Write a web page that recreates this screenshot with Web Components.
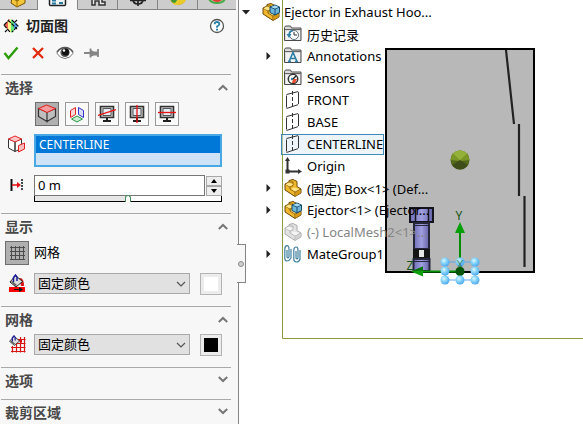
<!DOCTYPE html>
<html lang="zh-CN">
<head>
<meta charset="utf-8">
<title>切面图</title>
<style>
html, body { margin: 0; height: 100%; background: #fff; }
body { font-family: "Noto Sans", "Noto Sans CJK SC", sans-serif; font-size: 13px; color: #000; overflow: hidden; }
</style>
</head>
<body>
<cad-app></cad-app>
<script>
const svg = (w, h, body) => `<svg width="${w}" height="${h}" viewBox="0 0 ${w} ${h}" fill="none" aria-hidden="true">${body}</svg>`;

const monitor = line => svg(18, 18, `<path d="M2.500 1.500h13v11h-13z" fill="#c9c9c9" stroke="#333" stroke-width="1.600"/><path d="M5 3.500h8v7H5z" fill="#e6eef6" stroke="#555"/><path d="M9 13v3M5 16h8" stroke="#222" stroke-width="2"/>${line}`);
const plane = svg(18, 18, '<path d="M2.500 3.500L14.500 .5v13l-12 4z" stroke="#333" stroke-dasharray="12 1"/><path d="M8.500 0v18" stroke="#333" stroke-dasharray="4 2"/>');
const folder = inner => svg(18, 18, `<path d="M.5 15.500V2.500l1-1.500h5l1 2h9.500v12.500z" fill="#d9d9d9" stroke="#4a4a4a"/><path d="M1 4.500h16" stroke="#666"/><path d="M2 6h14v9H2z" fill="#f2f2f2"/>${inner}`);
const part = (a, b, c, s) => `<path d="M1 5l4-2V1.500L9 .5l4 2v5l4 2.500v4l-6 3.500L1 11z" fill="${a}" stroke="${s}"/><path d="M1 5l5 3 3-1.500V3L5 3M6 8v2l5 3 6-3M11 13v4" stroke="${s}" stroke-width=".8"/><path d="M1.500 5.500L5 3.500l4 2-3 2zM9 3l3-.5M7 10l3-1.500 5.500 1.500-4.500 2.500z" fill="${b}"/><path d="M11.500 13.500l5-2.500v3l-5 3z" fill="${c}"/>`;
const cube = '<path d="M8 4l5-2 4.500 2v5.500L13 12 8 9.500z" fill="#6eb6dc" stroke="#164c6b"/><path d="M8 4l5 2 4.500-2M13 6v6" stroke="#164c6b"/><path d="M9 4l4-1.500L16.500 4 13 5.500z" fill="#a9daf0"/>';
const bucket = '<path d="M7.500 1.500l7 6-6.500 5.500-6-5z" fill="#ddd" stroke="#222"/><path d="M5.500 8V3.500L7.500 1 9 3v4" stroke="#1b1b99" stroke-width="1.500"/><path d="M3 8l5 4 1-1-5-4z" fill="#555"/>';

const ICONS = {
  tabPart: svg(24, 8, '<path d="M5 -2l5 3 8-5v7l-8 4-6-4z" fill="#f3c63b" stroke="#7a5200"/><path d="M10 1v6M10 1l8-5" stroke="#a87500"/>'),
  tabProps: svg(24, 8, '<path d="M3.500 0v4.500q0 1 1 1h14q1 0 1-1V0" fill="#eef4f8" stroke="#222" stroke-width="1.500"/><path d="M6 .5h4M6 3.500h4M13 3h4" stroke="#26789e" stroke-width="2"/>'),
  tabConfig: svg(24, 8, '<path d="M6 -1v6h3V1h4v4h6V2h-3V-1" fill="#e8e8e8" stroke="#333" stroke-width="1.500"/>'),
  tabTarget: svg(24, 8, '<path d="M12 -2v8M4 .5h16M7 -1q0 5 5 5t5-5" stroke="#222" stroke-width="1.700"/>'),
  tabDisplay: svg(24, 8, '<ellipse cx="12" cy="-2" rx="8" ry="7" fill="#cf9c24"/><path d="M6 2q2 4 8 2.500T20-2L10-1z" fill="#e9cc2c"/><path d="M5-1q0 4 4 4l3-4z" fill="#3f9a31"/>'),
  tabFlow: svg(24, 8, '<path d="M4 -1q2 4 8 4t8-4" stroke="#45ac43" stroke-width="2"/><ellipse cx="12" cy="-1" rx="5" ry="3" fill="#e13f32"/>'),
  section: svg(16, 16, '<path d="M1 7l6-6v13z" fill="#ff6656"/><path d="M5 3l3-2v14l-3-3z" fill="#fff38c"/><path d="M8 1l4 4v6l-4 4z" fill="#62e779"/><path d="M11 3l4 5-4 4z" fill="#54a6ff"/><path d="M1 7l5-5M1 7l6 7M5 2l9 9M9 2l6 6-6 6M12 4l2-2M4 12l-2 2" stroke="#111" stroke-width="1.200" stroke-dasharray="4 1"/>'),
  help: svg(16, 16, '<circle cx="8" cy="8" r="6.500" fill="#fff" stroke="#555" stroke-width="1.300"/><path d="M5.700 6.200Q5.700 4 8 4t2.300 2.200Q10.300 7.300 8 8.500v1.300" stroke="#2a81ae" stroke-width="1.800"/><path d="M7 10.800h2v1.700H7z" fill="#2a81ae"/>'),
  ok: svg(16, 16, '<path d="M1.500 8l4 5L14.500 2.500" stroke="#2f9e0e" stroke-width="2.400"/>'),
  cancel: svg(16, 16, '<path d="M3 3l10 10M13 3L3 13" stroke="#e02a0c" stroke-width="2.300"/>'),
  eye: svg(18, 16, '<path d="M.7 8Q4 2.500 9 2.500T17.300 8Q14 13.500 9 13.500T.7 8z" fill="#fff" stroke="#777"/><path d="M1 7Q4 2.500 9 2.500T17 7" stroke="#555" stroke-width="1.400"/><circle cx="9" cy="7.500" r="4.600" fill="#555"/><circle cx="9.500" cy="7" r="3.500" fill="#111"/><circle cx="8" cy="5.500" r="1.200" fill="#fff"/>'),
  pin: svg(16, 16, '<path d="M0 8h6M6.500 3.500v9M14 4v8" stroke="#858585" stroke-width="1.800"/><path d="M7 5l3 1.500h4v4h-4L7 11.500z" fill="#858585"/>'),
  cubeTop: svg(20, 20, '<path d="M1.500 4.500L10 8v9.500l-8.500-5zM18.500 4.500L10 8v9.500l8.500-5z" fill="#bebebe" stroke="#333" stroke-width="1.200"/><path d="M1.500 4.500l8-3.500 9 3.500L10 8.500z" fill="#f39a9a" stroke="#e01c1c"/>'),
  planes: svg(18, 18, '<path d="M2.500 5.500l5-3v7l-5 3z" fill="#fbd6d6" stroke="#dc2424"/><path d="M10.500 2.500l5 3v7l-5-3z" fill="#d9dcf7" stroke="#3434c8"/><path d="M3.500 14L9 11l5.500 3L9 17z" fill="#c9ecd0" stroke="#2a9a44"/>'),
  viewDiag: monitor('<path d="M0 10.500L18 4.500" stroke="#f01010" stroke-width="1.300"/>'),
  viewVert: monitor('<path d="M9 0v18" stroke="#f01010" stroke-width="1.300"/>'),
  viewHorz: monitor('<path d="M0 7.500h18" stroke="#f01010" stroke-width="1.300"/>'),
  pick: svg(20, 18, '<path d="M1.500 4L8 6.500v10L1.500 13zM14.500 4L8 6.500v10l6.500-3z" fill="#fff" stroke="#333"/><path d="M1.500 4L8 1l6.500 3L8 7z" fill="#ffc9c9" stroke="#e02222"/><path d="M11.500 10.500l6-2.500v6l-6 3z" fill="#fbbcbc" stroke="#e02222"/>'),
  offset: svg(14, 12, '<path d="M1.500 0v12" stroke="#111" stroke-width="2"/><path d="M12 0v12" stroke="#111" stroke-width="1.500" stroke-dasharray="2 1"/><path d="M2 6h7" stroke="#e01010" stroke-width="1.500"/><path d="M7 3l4 3-4 3z" fill="#e01010"/>'),
  mesh: svg(16, 16, '<path d="M2.500 1v14M6.500 1v14M10.500 1v14M14.500 1v14M1 2.500h15M1 6.500h15M1 10.500h15M1 14.500h15" stroke="#4c4c4c"/>'),
  fill: svg(18, 18, `<path d="M1 13h16v5H1z" fill="#f00"/><path d="M11 4q5-1 5 8h-3z" fill="#d31515"/>${bucket}<path d="M6 15.500h7" stroke="#111"/><path d="M11 13l4 2.500-4 2.500z" fill="#111"/>`),
  meshFill: svg(18, 18, `<path d="M4.500 11v6.500M8.500 3v14.500M12.500 2v15.500M16.500 2v15.500M3 16.500h14.500M3 12.500h14.500M7 8.500h10.500M10 4.500h7.500" stroke="#d81414" stroke-width="1.200"/><path d="M10 4h4v4l-3-2z" fill="#d81414"/><g transform="scale(.8)">${bucket}</g>`),
  assembly: svg(18, 18, part('#f0b72c', '#ffe486', '#d79716', '#6f4b08') + cube),
  history: folder('<circle cx="10" cy="10" r="4.500" fill="#fff" stroke="#60727c"/><path d="M10 7v3h3" stroke="#333"/><path d="M2.500 9h5L5 13z" fill="#2c80a8"/><path d="M5 10q0-4 4-4.500" stroke="#2c80a8" stroke-width="1.500"/>'),
  notes: folder('<path d="M5 14.500L9 5.500l4 9M6.500 11.500h5M4 14.500h3M11 14.500h3" stroke="#2b7da5" stroke-width="1.600"/>'),
  sensor: folder('<circle cx="9" cy="10" r="4.700" fill="#fff" stroke="#333" stroke-width="1.500"/><path d="M9 10l3-3" stroke="#222" stroke-width="1.500"/><path d="M9 10h4l-2 4H8z" fill="#ed4b2a"/><circle cx="8" cy="10" r="1.200" fill="#2b7da5"/>'),
  plane,
  origin: svg(18, 18, '<path d="M3.500 16V3M3 14.500h12" stroke="#333" stroke-width="2"/><path d="M1 4l2.500-4L6 4zM14 12l4 2.500L14 17z" fill="#333"/><path d="M1.500 12.500h4v4h-4z" fill="#333"/>'),
  part: svg(18, 18, part('#f0b72c', '#ffe486', '#d79716', '#6f4b08')),
  ghost: svg(18, 18, part('#e2e2e2', '#f5f5f5', '#d2d2d2', '#ababab')),
  mates: svg(18, 18, '<path d="M3 5v7q1 2 2 0V4Q5 .7 3 .7T.8 4v9q0 3 2.200 3T7 13V4" stroke="#3e7f9f" stroke-width="1.200"/><path d="M12 6v7q1 2 2 0V5q0-3-2-3t-2.200 3v9q0 3 2.700 3t3.500-3V5" stroke="#3e7f9f" stroke-width="1.200"/>')
};

const RESET = `*{box-sizing:border-box} svg{display:block;flex:none} button{font:inherit;color:inherit;margin:0;padding:0;border:0;background:none;display:grid;place-items:center}`;
function define(name, render, after) {
  customElements.define(name, class extends HTMLElement {
    connectedCallback() {
      if (this.shadowRoot) return;
      this.attachShadow({ mode: 'open' }).innerHTML = render(this);
      if (after) after(this, this.shadowRoot);
    }
  });
}

define('cad-icon', el => `<style>:host{display:block;flex:none} svg{display:block}</style>${ICONS[el.getAttribute('name')]}`);

define('icon-button', el => {
  const l = el.getAttribute('label');
  return `<style>${RESET}
:host{display:block;flex:none}
button{width:22px;height:22px}
:host([framed]) button{width:24px;height:24px;border:1px solid #999;background:#fafafa}
:host([pressed]) button{border-color:#6e6e6e;background:#b0b0b0}
</style><button type="button" aria-label="${l}" title="${l}"${el.hasAttribute('framed') ? ` aria-pressed="${el.hasAttribute('pressed')}"` : ''}><cad-icon name="${el.getAttribute('icon')}"></cad-icon></button>`;
});

define('tab-strip', () => `<style>${RESET}
:host{display:grid;grid-template-columns:38fr 40fr 40fr 40fr 40fr 38fr;height:10px;margin-right:2px}
button{height:10px;overflow:hidden;align-items:start;border-right:1px solid #858585;border-bottom:1px solid #858585;background:#cdcdcd}
button[aria-selected=true]{background:#f7f7f7;border-bottom-color:#f7f7f7}
button:last-child{border-right:0}
</style>` + [['tabPart', '特征'], ['tabProps', '属性'], ['tabConfig', '配置'], ['tabTarget', '尺寸'], ['tabDisplay', '外观'], ['tabFlow', '流动']]
  .map(([i, l]) => `<button type="button" role="tab" aria-label="${l}" aria-selected="${i === 'tabProps'}"><cad-icon name="${i}"></cad-icon></button>`).join(''),
  (el) => el.setAttribute('role', 'tablist'));

define('panel-section', el => `<style>${RESET}
:host{display:block;margin:0 7px 0 1px;border-top:1px solid #a9a9a9}
h2{margin:0;font-size:14px;line-height:22px;color:#484848}
button{width:100%;height:26px;display:flex;align-items:center;justify-content:space-between;padding:0 3px 2px 4px}
.body{display:flex;flex-direction:column;gap:8px;padding:1px 9px 11px 4px}
:host(:not([open])) .body{padding:0 0 5px}
:host(:not([open])) svg{transform:rotate(180deg)}
</style><h2><button type="button" aria-expanded="${el.hasAttribute('open')}">${el.getAttribute('heading')}${svg(10, 10, '<path d="M.8 8L5 4l4.200 4" stroke="#777" stroke-width="2"/>')}</button></h2><div class="body"><slot></slot></div>`,
(el, root) => root.querySelector('button').addEventListener('click', e => {
  e.currentTarget.setAttribute('aria-expanded', el.toggleAttribute('open'));
}));

define('field-row', () => `<style>
:host{display:grid;grid-template-columns:24px minmax(0,1fr);column-gap:5px;align-items:start}
.lead{display:grid;justify-items:center;align-content:center;min-height:20px}
</style><div class="lead"><slot name="lead"></slot></div><slot></slot>`);

define('button-row', () => `<style>:host{display:flex;gap:6px;padding-left:1px}</style><slot></slot>`);

define('pick-list', () => `<style>
:host{display:block}
select{display:block;width:100%;height:33px;margin:0;padding:0;border:2px solid #4aa8e4;border-radius:0;background:#cfe3f8;font:12px "Noto Sans",sans-serif;overflow:hidden;outline:0;scrollbar-width:none}
option{height:17px;min-height:17px;line-height:17px;padding:0 3px;background:#0078d7;color:#fff}
</style><select size="2" aria-label="参考剖面"><option>CENTERLINE</option></select>`);

define('distance-field', () => `<style>${RESET}
:host{display:block}
.row{display:grid;grid-template-columns:minmax(0,1fr) 16px;gap:1px}
input[type=text]{width:100%;height:21px;padding:0 3px 2px;border:1px solid #777;border-radius:0;background:#fff;font:13px "Noto Sans",sans-serif;outline:0}
.spin{display:grid;grid-template-rows:10px 10px;align-content:center}
.spin button{border:1px solid #a8a8a8;background:#eee}
input[type=range]{appearance:none;display:block;width:100%;height:6px;margin:0;border:solid #000;border-width:0 1px 1px;background:linear-gradient(90deg,#e6e6e6 50%,#fff 50%)}
input[type=range]::-webkit-slider-thumb{appearance:none;width:6px;height:7px;border:1px solid #438e57;border-bottom:0;border-radius:3px 3px 0 0;background:#fff}
</style><div class="row"><input type="text" value="0 m" aria-label="等距距离"><div class="spin"><button type="button" aria-label="增加">${svg(6, 4, '<path d="M0 4l3-4 3 4z" fill="#000"/>')}</button><button type="button" aria-label="减少">${svg(6, 4, '<path d="M0 0l3 4 3-4z" fill="#000"/>')}</button></div></div><input type="range" value="50" aria-label="等距滑块">`);

define('colour-field', el => `<style>${RESET}
:host{display:grid;grid-template-columns:minmax(0,1fr) 22px;gap:10px;align-items:start}
.select{display:grid;align-items:center}
select,.select svg{grid-area:1/1}
select{appearance:none;width:100%;height:21px;margin:0;padding:0 3px 2px;border:1px solid #a9a9a9;border-radius:0;background:#e1e1e1;color:#000;font:13px/17px "Noto Sans CJK SC",sans-serif;outline:0}
.select svg{justify-self:end;margin-right:4px;pointer-events:none}
button{width:22px;height:22px;border:1px solid #b3b3b3;background:#ececec}
button span{width:14px;height:14px;background:${el.getAttribute('colour')}}
</style><div class="select"><select aria-label="${el.getAttribute('label')}"><option>固定颜色</option></select>${svg(10, 6, '<path d="M1 1l4 4 4-4" stroke="#555" stroke-width="1.200"/>')}</div><button type="button" aria-label="选择颜色"><span></span></button>`);

define('property-panel', () => `<style>${RESET}
:host{display:block;position:relative;z-index:1;background:#f7f7f7;border-right:1px solid #858585;font-family:"Noto Sans CJK SC",sans-serif}
header{display:grid;grid-template-columns:22px 1fr 22px;align-items:center;height:32px;padding-right:10px}
h1{margin:0;padding:0 0 2px 4px;font-size:14px;line-height:20px;color:#222}
.confirm{display:flex;gap:5px;align-items:center;height:22px;margin-bottom:10px}
.handle{position:absolute;left:100%;top:244px;width:9px;height:39px;margin-left:-1px;border:1px solid #858585;border-left:0;background:#f7f7f7}
.handle i{width:6px;height:6px;border:1px solid #8a8a8a;border-radius:50%;background:#d0d0d0}
.label{line-height:22px}
</style>
<tab-strip></tab-strip>
<header><cad-icon name="section" style="justify-self:center"></cad-icon><h1>切面图</h1><icon-button icon="help" label="帮助"></icon-button></header>
<div class="confirm"><icon-button icon="ok" label="确定"></icon-button><icon-button icon="cancel" label="取消"></icon-button><icon-button icon="eye" label="预览"></icon-button><icon-button icon="pin" label="保持可见"></icon-button></div>
<panel-section heading="选择" open>
<field-row><button-row>
<icon-button framed pressed icon="cubeTop" label="平面"></icon-button><icon-button framed icon="planes" label="参考平面"></icon-button><icon-button framed icon="viewDiag" label="视图方向"></icon-button><icon-button framed icon="viewVert" label="竖直"></icon-button><icon-button framed icon="viewHorz" label="水平"></icon-button>
</button-row></field-row>
<field-row><cad-icon slot="lead" name="pick"></cad-icon><pick-list></pick-list></field-row>
<field-row><cad-icon slot="lead" name="offset"></cad-icon><distance-field></distance-field></field-row>
</panel-section>
<panel-section heading="显示" open>
<field-row><icon-button slot="lead" framed pressed icon="mesh" label="网格"></icon-button><span class="label">网格</span></field-row>
<field-row><cad-icon slot="lead" name="fill"></cad-icon><colour-field label="显示颜色" colour="#fff"></colour-field></field-row>
</panel-section>
<panel-section heading="网格" open>
<field-row><cad-icon slot="lead" name="meshFill"></cad-icon><colour-field label="网格颜色" colour="#000"></colour-field></field-row>
</panel-section>
<panel-section heading="选项"></panel-section>
<panel-section heading="裁剪区域"></panel-section>
<button class="handle" type="button" aria-label="折叠面板"><i></i></button>`);

define('tree-item', el => `<style>${RESET}
:host{display:flex;align-items:center;height:22px;padding-left:22px;white-space:nowrap}
:host([root]){padding-left:0}
.arrow{width:12px;height:12px;margin-left:1px}
.node{display:flex;align-items:center;height:21px;gap:5px;margin-left:7px;padding:0 0 0 2px;border:1px solid transparent}
:host([root]) .node{gap:4px}
:host([selected]) .node{border-color:#3f8ab8;background:#dcebf780}
:host([muted]) .node{color:#858585}
</style>${el.hasAttribute('arrow') ? `<button class="arrow" type="button" aria-label="展开">${el.hasAttribute('root') ? svg(8, 5, '<path d="M0 0h8L4 4.500z" fill="#222"/>') : svg(5, 8, '<path d="M.5 0v8l4-4z" fill="#222"/>')}</button>` : '<span class="arrow"></span>'}
<div class="node"><cad-icon name="${el.getAttribute('icon')}"></cad-icon><span><slot></slot></span></div>`,
el => el.setAttribute('role', 'treeitem'));

define('feature-tree', () => `<style>:host{display:block;padding-top:1px}</style><slot></slot>`, el => el.setAttribute('role', 'tree'));

define('model-scene', () => {
  const beads = [];
  for (const y of [262, 271, 280]) for (const x of [445, 460, 475]) if (x !== 460 || y !== 271) beads.push(`<circle cx="${x}" cy="${y}" r="4.500" fill="url(#bead)"/>`);
  return `<style>:host{display:block} svg{display:block;width:100%;height:100%} text{font:12px "Noto Sans",sans-serif;fill:#145514;text-anchor:middle}</style>
<svg aria-label="模型视图"><defs>
<radialGradient id="bead" cx=".38" cy=".35" r=".7"><stop offset="0" stop-color="#dff7ff"/><stop offset=".4" stop-color="#8ed8fb"/><stop offset="1" stop-color="#46a4ec"/></radialGradient>
<linearGradient id="tube"><stop offset="0" stop-color="#6f6db5"/><stop offset=".5" stop-color="#a09fe0"/><stop offset="1" stop-color="#6664a8"/></linearGradient>
</defs>
<path d="M43.500 0v338.500H4000" fill="none" stroke="#8a9a3c"/>
<g transform="translate(-239 0)" fill="none">
<rect x="386" y="49" width="148" height="223" fill="#b8b8b8" stroke="#000" stroke-width="2"/>
<path d="M506 50l8 74M519 124v72M524.500 196v71" stroke="#222" stroke-width="2.200"/>
<circle cx="460" cy="160" r="9.500" fill="#546a1b"/>
<path d="M450.500 160a9.500 9.500 0 0 1 19 0l-9.500 1z" fill="#7c9626"/><path d="M453 153.500a9.500 9.500 0 0 1 14 0l-7 6.500z" fill="#94b13a"/><path d="M452 165l8-5 8 5a9.500 9.500 0 0 1-16 0z" fill="#3f4e18"/>
<path d="M410 208h23v14h-23z" fill="url(#tube)" stroke="#15151d" stroke-width="2"/><path d="M415.500 208v14M428.500 208v14" stroke="#15151d" stroke-width="1.500"/>
<path d="M414 223h15v26h-15z" fill="url(#tube)" stroke="#26263a" stroke-width="2"/><path d="M414 225.500h15" stroke="#26263a"/>
<path d="M413 249h17v10h-17z" fill="#151515"/><path d="M419 250h5v7h-5z" fill="#e5e5e5"/>
<path d="M413.500 259h16v12h-16z" fill="url(#tube)" stroke="#26263a" stroke-width="2"/><path d="M413 261.500h17" stroke="#26263a"/>
<path d="M385 272h150" stroke="#000" stroke-width="2"/>
<path d="M420 271.500h40M460 271V232" stroke="#058c05" stroke-width="2"/>
<path d="M411 271.500l12-5v10zM460 222l-5 11h10z" fill="#08a008"/><path d="M411 271.500l12-5v4z" fill="#087008"/>
<path d="M445 262h30M445 280h30M445 262v18M475 262v18" stroke="#5aa7ee"/>
<circle cx="460" cy="271.500" r="4.500" fill="#075507"/>${beads.join('')}
<text x="459" y="220">Y</text><text x="410" y="270">Z</text><text x="460" y="269" opacity=".6">X</text>
</g></svg>`;
});

define('cad-app', () => `<style>
:host{display:grid;grid-template-columns:minmax(239px,25%) minmax(0,1fr);height:100vh;overflow:hidden}
main{display:grid;grid-template:minmax(0,1fr)/minmax(0,1fr);min-width:0}
model-scene,feature-tree{grid-area:1/1}
</style>
<property-panel></property-panel>
<main><model-scene></model-scene>
<feature-tree>
<tree-item root arrow icon="assembly">Ejector in Exhaust Hoo...</tree-item>
<tree-item icon="history">历史记录</tree-item>
<tree-item arrow icon="notes">Annotations</tree-item>
<tree-item icon="sensor">Sensors</tree-item>
<tree-item icon="plane">FRONT</tree-item>
<tree-item icon="plane">BASE</tree-item>
<tree-item selected icon="plane">CENTERLINE</tree-item>
<tree-item icon="origin">Origin</tree-item>
<tree-item arrow icon="part">(固定) Box&lt;1&gt; (Def...</tree-item>
<tree-item arrow icon="assembly">Ejector&lt;1&gt; (Ejector...</tree-item>
<tree-item muted icon="ghost">(-) LocalMesh2&lt;1&gt;...</tree-item>
<tree-item arrow icon="mates">MateGroup1</tree-item>
</feature-tree></main>`);
</script>
</body>
</html>
